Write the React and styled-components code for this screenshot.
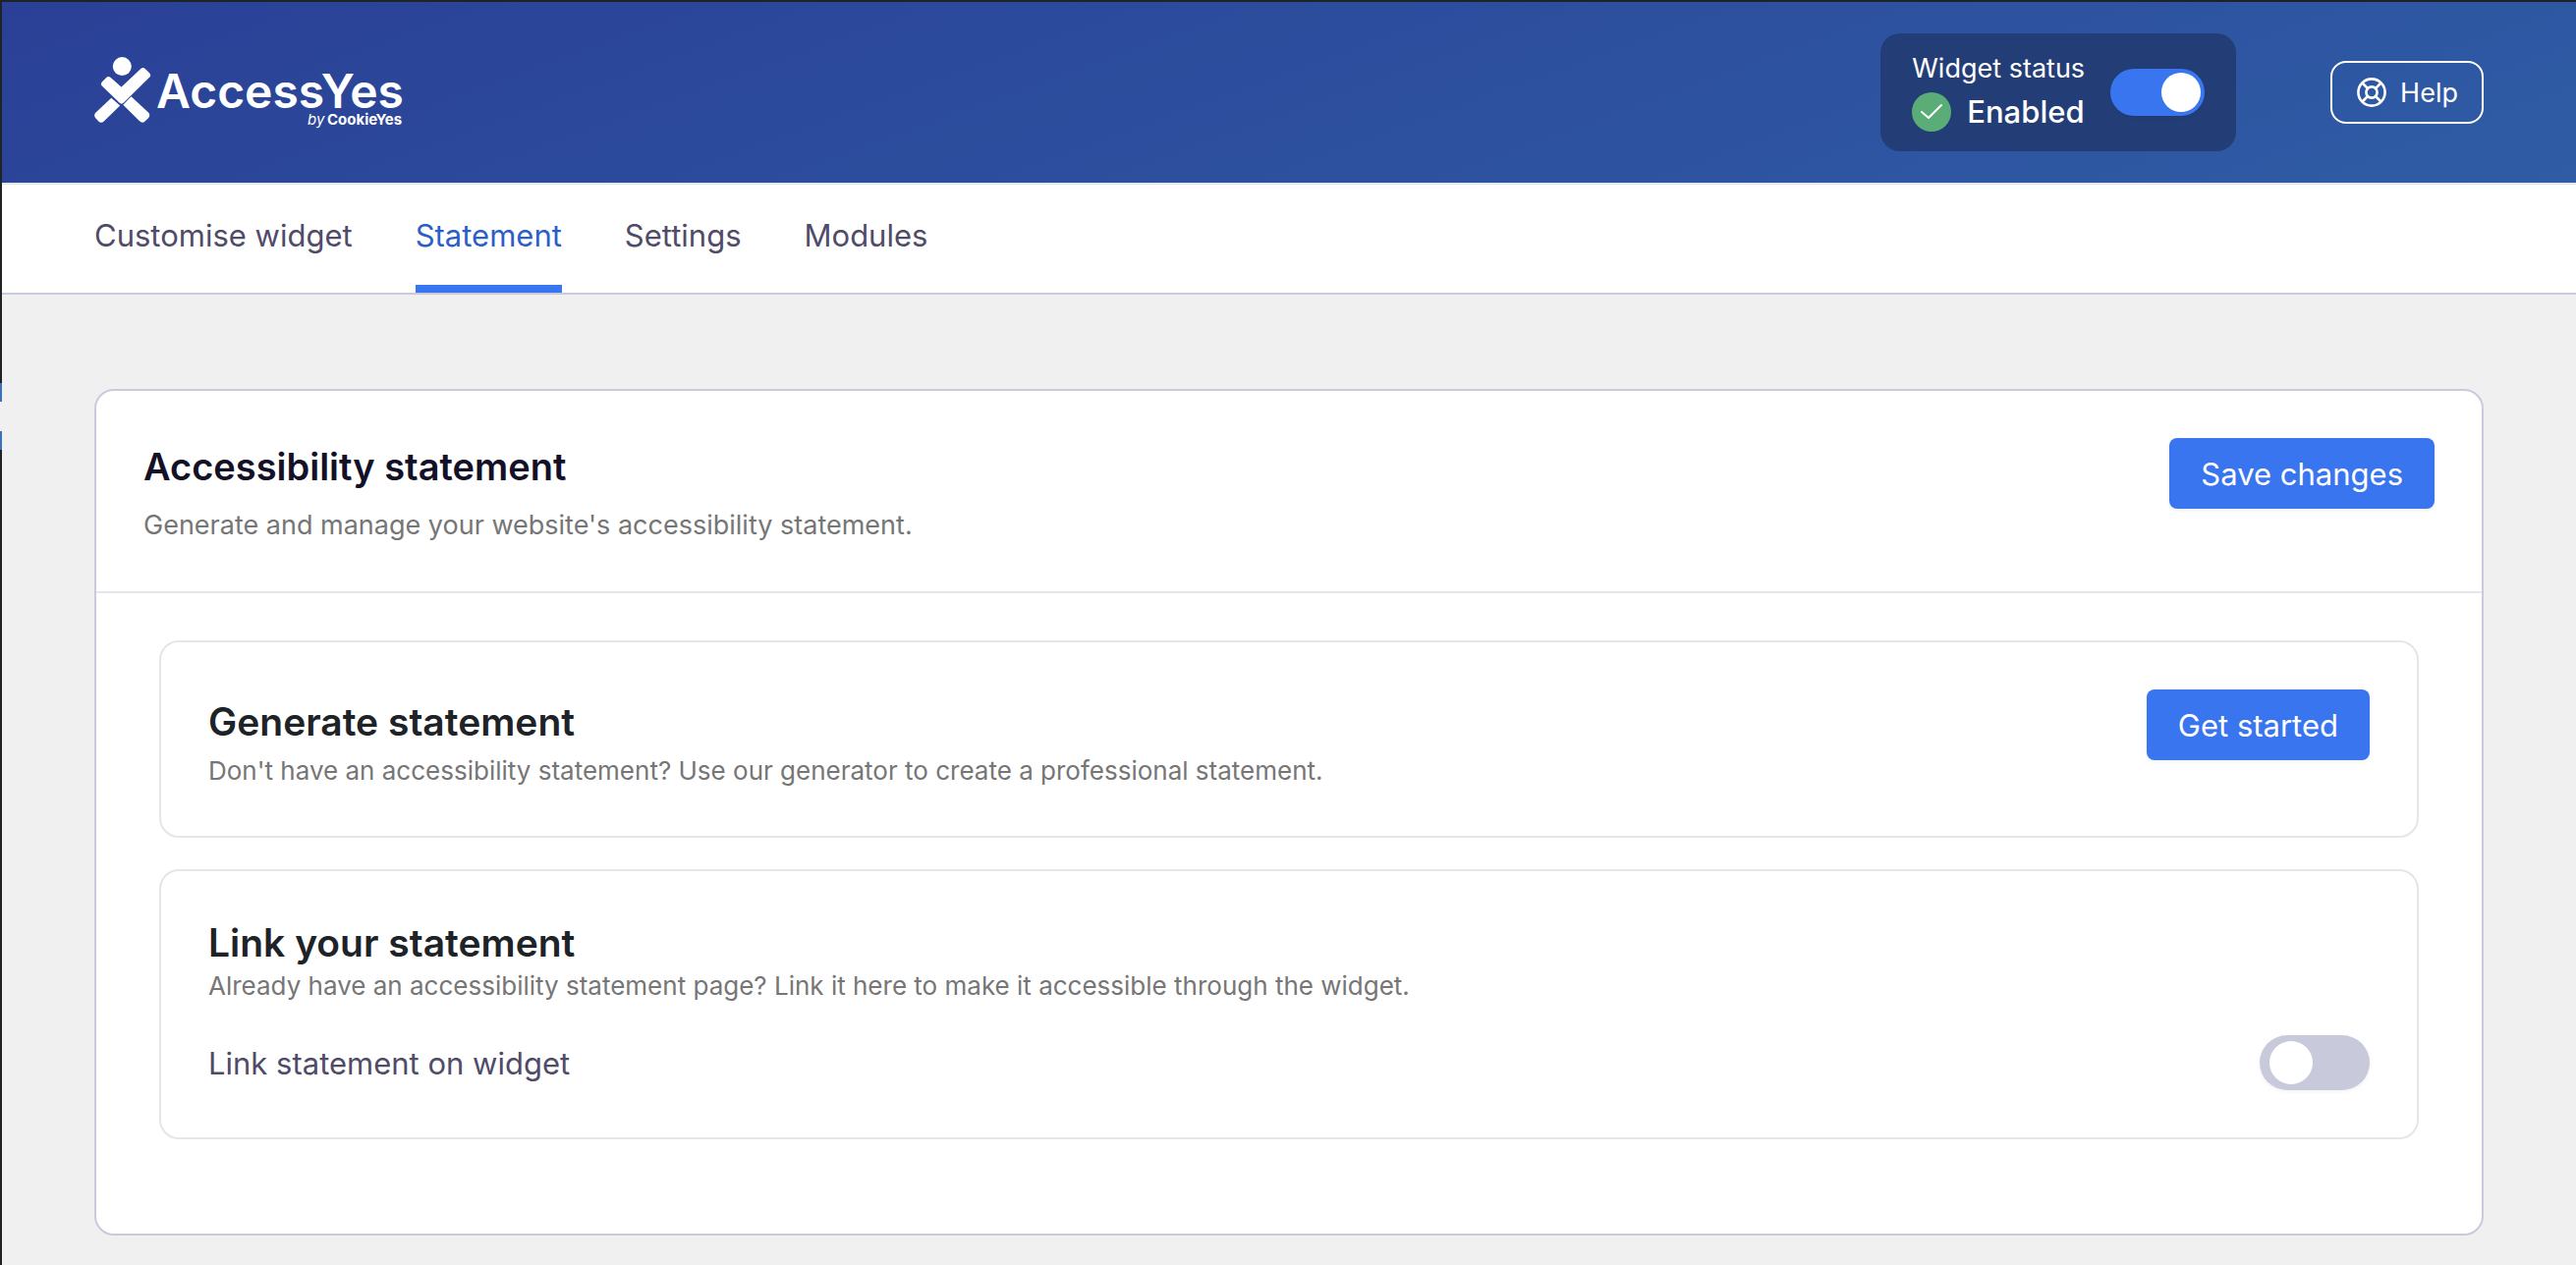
import { useState } from 'react'
import styled, { createGlobalStyle } from 'styled-components'

const tabs = ['Customise widget', 'Statement', 'Settings', 'Modules']

const Logo = () => (
  <LogoSvg viewBox="0 0 320 74" role="img" aria-label="AccessYes by CookieYes">
    <g fill="#fff">
      <circle cx="28.3" cy="10.6" r="9.5" />
      <path
        d="M14.5 24.3L27.5 36L49.5 15.3L53.8 19.5L27.7 45.2L10.3 28.5Z"
        stroke="#fff"
        strokeWidth="6.5"
        strokeLinejoin="round"
      />
      <path d="M17.3 42.7L26.2 50.4L10 66.3Q7 69.3 4.3 66.5L1.3 63.3Q-1 60.3 1.3 57.8Z" />
      <path d="M37.5 41.3L29.3 49.8L46 66.3Q49 69 51.5 66.5L55 63.3Q57.5 60.3 55 57.6Z" />
    </g>
    <LogoName x="63" y="53">AccessYes</LogoName>
    <LogoBy x="217" y="70">by</LogoBy>
    <LogoMaker x="237" y="70">CookieYes</LogoMaker>
  </LogoSvg>
)

const HelpIcon = () => (
  <svg width="32" height="32" viewBox="0 0 32 32" fill="none" stroke="#fff" strokeWidth="2.6" aria-hidden="true">
    <circle cx="16" cy="16" r="13.6" />
    <circle cx="16" cy="16" r="5.6" />
    <path d="M6.5 6.5l5.5 5.5M25.5 6.5L20 12M6.5 25.5L12 20M25.5 25.5L20 20" />
  </svg>
)

const CheckIcon = () => (
  <svg width="40" height="40" viewBox="0 0 40 40" fill="none" aria-hidden="true">
    <circle cx="20" cy="20" r="20" fill="#5aad77" />
    <path d="M10 20l7 6 13-13" stroke="#fff" strokeWidth="2" strokeLinecap="round" strokeLinejoin="round" />
  </svg>
)

const App = () => {
  const [active, setActive] = useState('Statement')
  const [enabled, setEnabled] = useState(true)
  const [linked, setLinked] = useState(false)

  return (
    <Page>
      <GlobalStyle />
      <MenuArrow />
      <Header>
        <Logo />
        <HeaderActions>
          <StatusBox>
            <div>
              <StatusLabel htmlFor="widget-status">Widget status</StatusLabel>
              <StatusValue>
                <CheckIcon />
                {enabled ? 'Enabled' : 'Disabled'}
              </StatusValue>
            </div>
            <Switch id="widget-status" type="checkbox" role="switch" checked={enabled} onChange={() => setEnabled(!enabled)} />
          </StatusBox>
          <HelpButton type="button">
            <HelpIcon />
            Help
          </HelpButton>
        </HeaderActions>
      </Header>

      <Nav>
        {tabs.map(tab => (
          <Tab key={tab} type="button" $active={tab === active} onClick={() => setActive(tab)}>{tab}</Tab>
        ))}
      </Nav>

      <Main>
        <Card>
          <CardHeader>
            <div>
              <Title>Accessibility statement</Title>
              <Lead>Generate and manage your website's accessibility statement.</Lead>
            </div>
            <Button type="button">Save changes</Button>
          </CardHeader>
          <CardBody>
            <Panel>
              <PanelRow>
                <PanelText>
                  <PanelTitle>Generate statement</PanelTitle>
                  <Description>Don't have an accessibility statement? Use our generator to create a professional statement.</Description>
                </PanelText>
                <Button type="button">Get started</Button>
              </PanelRow>
            </Panel>
            <Panel>
              <PanelTitle>Link your statement</PanelTitle>
              <Description $tight>Already have an accessibility statement page? Link it here to make it accessible through the widget.</Description>
              <SwitchRow>
                <SwitchLabel htmlFor="link-statement">Link statement on widget</SwitchLabel>
                <Switch $large id="link-statement" type="checkbox" role="switch" checked={linked} onChange={() => setLinked(!linked)} />
              </SwitchRow>
            </Panel>
          </CardBody>
        </Card>
      </Main>
    </Page>
  )
}

export default App

const GlobalStyle = createGlobalStyle`
  * {
    box-sizing: border-box;
  }
  body {
    margin: 0;
    background: #f0f0f0;
    font-family: Inter, "Liberation Sans", sans-serif;
  }
  h1, h2, p {
    margin: 0;
  }
  button {
    font-family: inherit;
    cursor: pointer;
  }
`

const Page = styled.div`
  position: relative;
  min-height: 100vh;
  border-top: 2px solid #1d2327;
  border-left: 2px solid #1d2327;
`

const MenuArrow = styled.span`
  position: absolute;
  top: 388px;
  left: -2px;
  width: 2px;
  height: 68px;
  background: linear-gradient(#3a72b5 19px, #f0f0f0 19px, #f0f0f0 49px, #3a72b5 49px);
`

const Header = styled.header`
  display: flex;
  align-items: center;
  justify-content: space-between;
  height: 184px;
  padding: 0 94px;
  background: linear-gradient(160deg, #2a4096, #2f5ca5);
`

const LogoSvg = styled.svg`
  width: 320px;
  height: 74px;
`

const LogoName = styled.text`
  fill: #fff;
  font-size: 48px;
  font-weight: 600;
`

const LogoBy = styled.text`
  fill: #fff;
  font-size: 15px;
  font-style: italic;
`

const LogoMaker = styled.text`
  fill: #fff;
  font-size: 15px;
  font-weight: 700;
`

const HeaderActions = styled.div`
  display: flex;
  align-items: center;
  gap: 96px;
`

const StatusBox = styled.div`
  display: flex;
  align-items: center;
  gap: 26px;
  height: 120px;
  padding: 0 32px;
  border-radius: 20px;
  background: #233e76;
  color: #fff;
`

const StatusLabel = styled.label`
  display: block;
  font-size: 27px;
  line-height: 40px;
`

const StatusValue = styled.div`
  display: flex;
  align-items: center;
  gap: 16px;
  font-size: 31px;
  font-weight: 500;
  line-height: 48px;
`

const Switch = styled.input`
  display: flex;
  align-items: center;
  flex-shrink: 0;
  appearance: none;
  width: ${props => props.$large ? '112px' : '96px'};
  height: ${props => props.$large ? '56px' : '48px'};
  margin: 0;
  padding: 0 ${props => props.$large ? '10px' : '4px'};
  border-radius: 28px;
  justify-content: ${props => props.checked ? 'flex-end' : 'flex-start'};
  background: ${props => props.checked ? '#3875ef' : '#c9c9dc'};
  box-shadow: 0 2px 4px rgb(0 0 0 / 5%);
  cursor: pointer;

  &::before {
    content: '';
    width: ${props => props.$large ? '44px' : '40px'};
    height: ${props => props.$large ? '44px' : '40px'};
    border-radius: 50%;
    background: #fff;
  }
`

const HelpButton = styled.button`
  display: flex;
  align-items: center;
  gap: 13px;
  height: 64px;
  padding: 0 24px;
  border: 2px solid #fff;
  border-radius: 16px;
  background: transparent;
  color: #fff;
  font-size: 27px;
`

const Nav = styled.nav`
  display: flex;
  gap: 64px;
  height: 114px;
  padding: 0 94px;
  border-top: 2px solid #e5e5ed;
  border-bottom: 2px solid #c9cadd;
  background: #fff;
`

const Tab = styled.button`
  padding: 0;
  border: 0;
  border-bottom: 8px solid ${props => props.$active ? '#3875ef' : 'transparent'};
  background: none;
  color: ${props => props.$active ? '#2b5fc7' : '#504b68'};
  font-size: 31px;
`

const Main = styled.main`
  padding: 96px 94px 28px;
`

const Card = styled.section`
  border: 2px solid #c9cadd;
  border-radius: 20px;
  background: #fff;
`

const CardHeader = styled.div`
  display: flex;
  align-items: flex-start;
  justify-content: space-between;
  height: 206px;
  padding: 48px;
  border-bottom: 2px solid #e5e5eb;
`

const Title = styled.h1`
  color: #131128;
  font-size: 38px;
  font-weight: 600;
  line-height: 58px;
`

const Lead = styled.p`
  margin-top: 11px;
  color: #767676;
  font-size: 27px;
  line-height: 40px;
`

const Button = styled.button`
  height: 72px;
  padding: 0 32px;
  border: 0;
  border-radius: 8px;
  background: #3875ef;
  box-shadow: 0 2px 4px rgb(0 0 0 / 5%);
  color: #fff;
  font-size: 31px;
`

const CardBody = styled.div`
  display: flex;
  flex-direction: column;
  gap: 32px;
  padding: 48px 64px 96px;
`

const Panel = styled.section`
  padding: 48px;
  border: 2px solid #e5e5eb;
  border-radius: 20px;
`

const PanelRow = styled.div`
  display: flex;
  align-items: flex-start;
  justify-content: space-between;
`

const PanelText = styled.div`
  padding-top: 8px;
`

const PanelTitle = styled.h2`
  color: #1d2327;
  font-size: 39px;
  font-weight: 600;
  line-height: 49px;
`

const Description = styled.p`
  margin-top: ${props => props.$tight ? '2px' : '8px'};
  color: #767676;
  font-size: 26px;
  line-height: 36px;
`

const SwitchRow = styled.div`
  display: flex;
  align-items: center;
  justify-content: space-between;
  margin-top: 32px;
`

const SwitchLabel = styled.label`
  color: #504b68;
  font-size: 31px;
`
